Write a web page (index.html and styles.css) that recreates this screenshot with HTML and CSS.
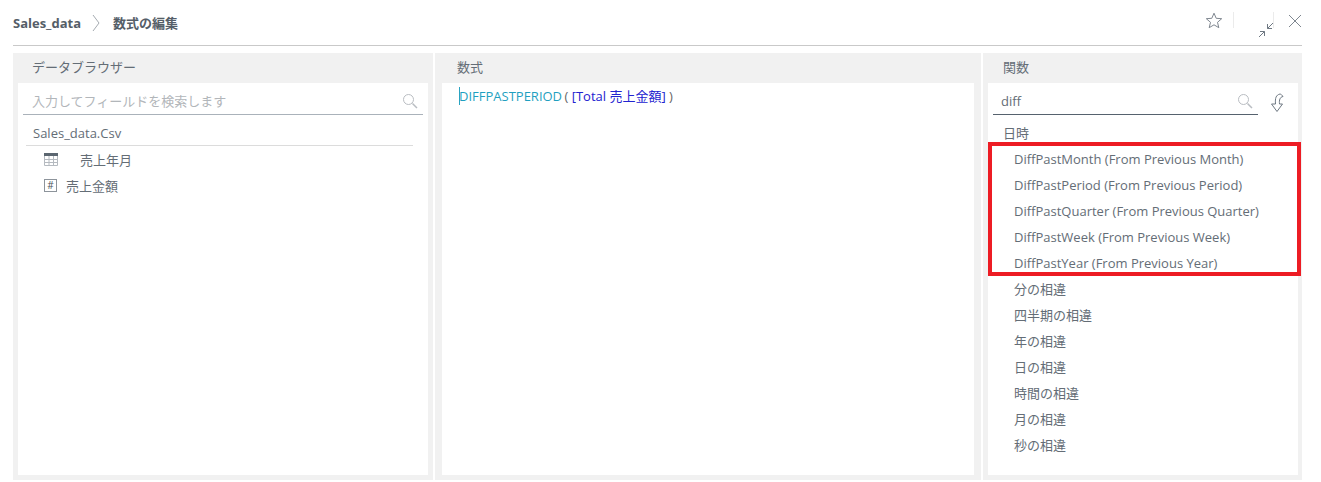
FILE: index.html
```html
<!DOCTYPE html>
<html lang="ja">
<head>
<meta charset="utf-8">
<title>数式の編集</title>
<link rel="stylesheet" href="styles.css">
</head>
<body>
<div class="page">
  <header class="top">
    <div class="crumbs">
      <span class="crumb-main">Sales_data</span>
      <svg class="chev" width="8" height="18" viewBox="0 0 8 18"><path d="M1 1l6 8-6 8" fill="none" stroke="#a5abb1" stroke-width="1"/></svg>
      <span class="crumb-sub">数式の編集</span>
    </div>
    <div class="actions">
      <svg class="ic-star" width="18" height="17" viewBox="0 0 18 17"><path d="M9 1.200l2.200 5.100 5.500.4-4.200 3.600 1.300 5.400L9 12.800l-4.800 2.900 1.300-5.400L1.300 6.700l5.500-.4z" fill="none" stroke="#7f8790" stroke-width="1"/></svg>
      <span class="sep"></span>
      <svg class="ic-shrink" width="16" height="16" viewBox="0 0 16 16"><path d="M15 1L9.500 6.500M9.500 2v4.500H14M1 15l5.500-5.500M2 9.500h4.500V14" fill="none" stroke="#6f7983" stroke-width="1"/></svg>
      <span class="sep sep2"></span>
      <svg class="ic-close" width="14" height="14" viewBox="0 0 14 14"><path d="M1 1l12 12M13 1L1 13" fill="none" stroke="#7f8790" stroke-width="1"/></svg>
    </div>
  </header>

  <main class="panels">
    <section class="panel panel-left">
      <h2 class="panel-title title-left">データブラウザー</h2>
      <div class="panel-body">
        <div class="search">
          <span class="placeholder">入力してフィールドを検索します</span>
          <svg class="ic-search" width="16" height="16" viewBox="0 0 16 16"><circle cx="6.500" cy="6.500" r="5" fill="none" stroke="#b9bdc2" stroke-width="1"/><path d="M10.500 10.500L15 15" stroke="#b9bdc2" stroke-width="1.500"/></svg>
        </div>
        <div class="source">Sales_data.Csv</div>
        <ul class="fields">
          <li class="field">
            <svg class="ic-table" width="14" height="13" viewBox="0 0 14 13"><rect x="0" y="0" width="14" height="3" fill="#5b6670"/><path d="M.5 3v9.500h13V3M.5 6.500h13M.5 9.500h13M5 3v9.500M9.500 3v9.500" fill="none" stroke="#b5bac0" stroke-width="1"/></svg>
            <span class="field-date">売上年月</span>
          </li>
          <li class="field">
            <span class="ic-num">#</span>
            <span>売上金額</span>
          </li>
        </ul>
      </div>
    </section>

    <section class="panel panel-mid">
      <h2 class="panel-title">数式</h2>
      <div class="panel-body formula"><span class="caret"></span><span class="fn">DIFFPASTPERIOD</span><span class="paren paren-open"> ( </span><span class="ref">[Total 売上金額]</span><span class="paren"> )</span></div>
    </section>

    <section class="panel panel-right">
      <h2 class="panel-title">関数</h2>
      <div class="panel-body">
        <div class="fn-search">
          <div class="search search-fn">
            <span class="query">diff</span>
            <svg class="ic-search" width="16" height="16" viewBox="0 0 16 16"><circle cx="6.500" cy="6.500" r="5" fill="none" stroke="#b9bdc2" stroke-width="1"/><path d="M10.500 10.500L15 15" stroke="#b9bdc2" stroke-width="1.500"/></svg>
          </div>
          <svg class="ic-sort" width="14" height="20" viewBox="0 0 14 20"><path d="M10 1C6 2 5 5 5.500 11H1.500L7 18.500 12.500 11H9.500C9 7 10 4 13 3.500 12 2 11 1.200 10 1z" fill="none" stroke="#6f7983" stroke-width="1"/></svg>
        </div>
        <div class="group">日時</div>
        <ul class="fn-list">
          <li>DiffPastMonth (From Previous Month)</li>
          <li>DiffPastPeriod (From Previous Period)</li>
          <li>DiffPastQuarter (From Previous Quarter)</li>
          <li>DiffPastWeek (From Previous Week)</li>
          <li>DiffPastYear (From Previous Year)</li>
          <li>分の相違</li>
          <li>四半期の相違</li>
          <li>年の相違</li>
          <li>日の相違</li>
          <li>時間の相違</li>
          <li>月の相違</li>
          <li>秒の相違</li>
        </ul>
      </div>
    </section>
  </main>
  <div class="highlight"></div>
</div>
</body>
</html>
```
FILE: styles.css
```css
* { box-sizing: border-box; }
html, body { margin: 0; padding: 0; background: #fff; }
body {
  width: 1321px;
  height: 482px;
  overflow: hidden;
  font-family: "Open Sans", "Noto Sans CJK JP", sans-serif;
  font-size: 13px;
  color: #646d76;
}
.page { position: relative; height: 482px; padding: 0 19px 2px 13px; display: flex; flex-direction: column; }
.top {
  height: 46px;
  flex: none;
  border-bottom: 1px solid #c9c9c9;
  display: flex;
  justify-content: space-between;
}
.crumbs { display: flex; align-items: center; height: 45px; }
.crumb-main { font-weight: 700; color: #555e68; font-size: 13px; }
.chev { margin: 0 13px 0 11px; }
.crumb-sub { font-weight: 700; color: #555e68; font-size: 13px; }
.actions { display: flex; align-items: flex-start; padding-top: 12px; }
.ic-star { margin-right: 10px; }
.sep { width: 1px; height: 16px; background: #ebebeb; }
.ic-shrink { margin: 10px 0 0 24px; }
.sep2 { margin-left: -1px; }
.ic-close { margin-left: 14px; margin-top: 2px; margin-right: 0; }
.panels { flex: 1; display: flex; gap: 2px; margin-top: 7px; min-height: 0; }
.panel { background: #f1f1f1; display: flex; flex-direction: column; padding: 0 5px 5px; }
.panel-left { width: 420px; }
.panel-mid { width: 546px; padding: 0 7px 5px; }
.panel-right { width: 319px; padding-right: 4px; }
.panel-title { margin: 0; height: 30px; flex: none; font-weight: 400; font-size: 13px; line-height: 29px; padding-left: 15px; color: #646d76; }
.title-left { padding-left: 14px; }
.panel-body { flex: 1; background: #fff; min-height: 0; }
.search { height: 32px; margin: 0 5px; border-bottom: 1px solid #aab2ba; display: flex; justify-content: space-between; align-items: center; padding: 4px 5px 0 9px; }
.placeholder { color: #b2b6ba; font-size: 13px; }
.source { height: 31px; margin: 0 15px 0 8px; border-bottom: 1px solid #dcdcdc; padding: 9px 0 0 7px; line-height: 18px; }
.fields { list-style: none; margin: 0; padding: 0 0 0 26px; }
.field { height: 26px; display: flex; align-items: center; }
.field-date { margin-left: 22px; }
.ic-num { width: 13px; height: 13px; border: 1px solid #8d949b; font-size: 10px; line-height: 11px; text-align: center; margin-right: 9px; color: #4d5660; }
.formula { padding: 4px 0 0 17px; font-size: 13px; line-height: 18px; white-space: pre; }
.caret { display: inline-block; width: 1px; height: 18px; background: #2aa4c2; vertical-align: -4px; margin-right: -1px; }
.fn { color: #1f9fc0; }
.paren { color: #666; }
.paren-open { margin-left: -1px; }
.ref { color: #2222d0; }
.fn-search { display: flex; align-items: center; }
.search-fn { width: 265px; margin: 0 0 0 5px; border-bottom-color: #56626e; padding: 5px 5px 0 8px; }
.query { font-size: 13px; }
.ic-sort { margin-left: 12px; margin-top: 8px; }
.group { height: 31px; padding: 5px 0 0 15px; line-height: 26px; }
.fn-list { list-style: none; margin: 0; padding: 0 0 0 26px; }
.fn-list li { height: 26px; line-height: 26px; white-space: nowrap; }
.highlight { position: absolute; left: 988px; top: 142px; width: 313px; height: 134px; border: 4px solid #ed1c24; pointer-events: none; }
```
